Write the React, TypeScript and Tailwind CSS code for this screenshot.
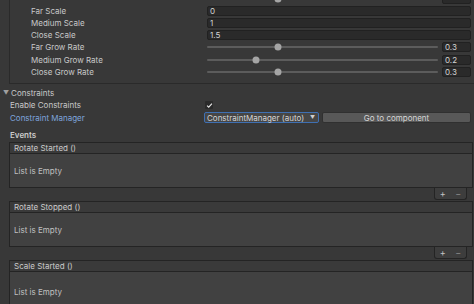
import React from "react";

const font = { fontFamily: "Inter, 'Noto Sans', sans-serif" };

function Field({ value }: { value: string }) {
  return (
    <div className="h-[10px] flex-1 bg-[#2a2a2a] border border-[#212121] rounded-[2px] flex items-center pl-[2px] text-[8px] leading-none text-[#d4d4d4]">
      {value}
    </div>
  );
}

function Slider({ value, hideText }: { value: number; hideText?: boolean }) {
  return (
    <div className="flex-1 flex items-center gap-[4px] h-full">
      <div className="relative flex-1 h-full flex items-center">
        <div className="h-[2px] w-full bg-[#5c5c5c] rounded-full" />
        <div
          className="absolute top-1/2 -translate-y-1/2 -translate-x-1/2 w-[7px] h-[7px] rounded-full bg-[#a5a5a5]"
          style={{ left: `calc(${value * 100}% + ${4 - value * 8}px)` }}
        />
      </div>
      <div className="w-[29px] h-[10px] bg-[#2a2a2a] border border-[#212121] rounded-[2px] flex items-center pl-[2px] text-[8px] leading-none text-[#d4d4d4]">
        {hideText ? "" : value}
      </div>
    </div>
  );
}

function Row({ label, children }: { label: string; children?: React.ReactNode }) {
  return (
    <div className="h-[12.1px] flex items-center">
      <div className="w-[197px] pl-[21px] text-[8px] leading-none text-[#c8c8c8] whitespace-nowrap">{label}</div>
      <div className="flex-1 flex items-center h-full pr-[3px]">{children}</div>
    </div>
  );
}

function EventBox({ title, last }: { title: string; last?: boolean }) {
  return (
    <div className="ml-[9px] mr-[1px] flex flex-col">
      <div className="h-[12px] bg-[#3a3a3a] border border-[#242424] flex items-center pl-[4px] text-[8px] leading-none text-[#cbcbcb] whitespace-nowrap">
        {title}
      </div>
      <div className={`${last ? "h-[40px]" : "h-[34px]"} bg-[#414141] border-x border-b border-[#242424] flex items-center pl-[4px] text-[8px] leading-none text-[#c0c0c0]`}>
        List is Empty
      </div>
      {!last && (
        <div className="h-[12px] flex justify-end pr-[6px]">
          <div className="w-[33px] h-[12px] bg-[#3d3d3d] border-x border-b border-[#242424] rounded-b-[3px] flex items-center justify-around text-[#c4c4c4] text-[9px] leading-none">
            <span>+</span>
            <span className="text-[#8a8a8a]">−</span>
          </div>
        </div>
      )}
    </div>
  );
}

export default function App() {
  return (
    <div className="w-[474px] h-[304px] bg-[#383838] overflow-hidden" style={font}>
      <div className="h-[84px] ml-[9px] border-l border-b border-[#2a2a2a] overflow-hidden">
        <div className="mt-[-7px] flex flex-col">
          <Row label="">
            <Slider value={0.3} hideText />
          </Row>
          <Row label="Far Scale">
            <Field value="0" />
          </Row>
          <Row label="Medium Scale">
            <Field value="1" />
          </Row>
          <Row label="Close Scale">
            <Field value="1.5" />
          </Row>
          <Row label="Far Grow Rate">
            <Slider value={0.3} />
          </Row>
          <Row label="Medium Grow Rate">
            <Slider value={0.2} />
          </Row>
          <Row label="Close Grow Rate">
            <Slider value={0.3} />
          </Row>
        </div>
      </div>
      <div className="mt-[3px] h-[12px] flex items-center pl-[3px] text-[8px] leading-none text-[#c8c8c8]">
        <span className="text-[6px] text-[#a0a0a0] mr-[2px]">▼</span>
        Constraints
      </div>
      <div className="h-[12px] flex items-center">
        <div className="w-[205px] pl-[10px] text-[8px] leading-none text-[#c8c8c8]">Enable Constraints</div>
        <div className="w-[8px] h-[8px] bg-[#2a2a2a] rounded-[1px] flex items-center justify-center">
          <svg width="7" height="7" viewBox="0 0 8 8">
            <path d="M1.2 4.2 L3.1 6 L6.8 1.8" fill="none" stroke="#e8e8e8" strokeWidth="1.3" />
          </svg>
        </div>
      </div>
      <div className="mt-[1px] h-[11px] flex items-center">
        <div className="w-[204px] pl-[10px] text-[8px] leading-none text-[#7ea5de]">Constraint Manager</div>
        <div className="w-[115px] h-[11px] bg-[#464646] border border-[#3f70b3] rounded-[2px] flex items-center pl-[2px] pr-[3px] text-[8px] leading-none text-[#d6d6d6] whitespace-nowrap">
          <span className="flex-1">ConstraintManager (auto)</span>
          <span className="text-[5px] text-[#cfcfcf]">▼</span>
        </div>
        <div className="ml-[3px] w-[149px] h-[11px] bg-[#585858] border border-[#303030] rounded-[2px] flex items-center justify-center text-[8px] leading-none text-[#d6d6d6] whitespace-nowrap">
          Go to component
        </div>
      </div>
      <div className="mt-[6px] h-[12px] flex items-center pl-[10px] text-[8px] leading-none font-semibold text-[#cbcbcb]">
        Events
      </div>
      <div className="mt-[1px] flex flex-col gap-[1px]">
        <EventBox title="Rotate Started ()" />
        <EventBox title="Rotate Stopped ()" />
        <EventBox title="Scale Started ()" last />
      </div>
    </div>
  );
}
